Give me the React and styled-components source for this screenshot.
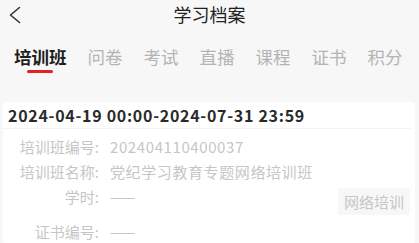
import React from 'react'
import styled, { createGlobalStyle } from 'styled-components'

const GlobalStyle = createGlobalStyle`
    body {
        margin: 0;
        background: #f7f7f7;
        font-family: "Noto Sans CJK SC", "Noto Sans", sans-serif;
    }
`

const Page = styled.div`
    width: 419px;
    height: 243px;
    overflow: hidden;
    background: #f7f7f7;
`

const Header = styled.div`
    display: grid;
    grid-template-columns: 40px 1fr 40px;
    align-items: center;
    height: 28px;
`

const Back = styled.div`
    display: flex;
    align-items: center;
    padding: 2px 0 0 8px;
    height: 28px;
    box-sizing: border-box;
`

const Title = styled.h1`
    margin: 0;
    text-align: center;
    font-size: 18px;
    font-weight: 400;
    color: #222;
    line-height: 28px;
`

const Tabs = styled.div`
    display: flex;
    gap: 21px;
    padding-left: 14px;
    margin-top: 17px;
`

const Tab = styled.div`
    display: flex;
    flex-direction: column;
    align-items: center;
    font-size: 17.5px;
    line-height: 24px;
    font-weight: ${p => (p.active ? 700 : 400)};
    color: ${p => (p.active ? '#1e1e1e' : '#b4b4b4')};
`

const Indicator = styled.div`
    width: 26px;
    height: 3px;
    margin-top: 1px;
    border-radius: 2px;
    background: ${p => (p.active ? '#e3211f' : 'transparent')};
`

const Card = styled.div`
    margin: 29px 4px 0 3px;
    background: #fff;
    border-radius: 3px;
`

const CardHead = styled.div`
    height: 26px;
    display: flex;
    align-items: center;
    padding-left: 5px;
    font-size: 16px;
    font-weight: 700;
    letter-spacing: 0.7px;
    color: #2a2a2a;
    border-bottom: 1px solid #f3f3f3;
    margin-right: 4px;
`

const CardBody = styled.div`
    padding-top: 5px;
`

const Row = styled.div`
    display: flex;
    align-items: flex-start;
    height: ${p => (p.tall ? 35 : 25)}px;
    font-size: 15px;
    line-height: 25px;
    color: #c6c6c6;
`

const Label = styled.div`
    width: 96px;
    text-align: right;
    margin-right: 11px;
    white-space: nowrap;
`

const Value = styled.div`
    flex: 1;
    white-space: nowrap;
    letter-spacing: 0.6px;
`

const Badge = styled.div`
    margin: 4px 5px 0 0;
    height: 27px;
    padding: 0 6px;
    display: flex;
    align-items: center;
    background: #f7f7f7;
    border-radius: 3px;
    font-size: 15px;
    color: #c6c6c6;
`

const tabs = ['培训班', '问卷', '考试', '直播', '课程', '证书', '积分']

const App = () => {
    return (
        <Page>
            <GlobalStyle />
            <Header>
                <Back>
                    <svg width="13" height="18" viewBox="0 0 13 18">
                        <path d="M11.5 1.5 L2.5 9 L11.5 16.5" fill="none" stroke="#333" strokeWidth="1.6" strokeLinecap="round" strokeLinejoin="round" />
                    </svg>
                </Back>
                <Title>学习档案</Title>
                <div />
            </Header>
            <Tabs>
                {tabs.map((t, i) => (
                    <Tab key={t} active={i === 0}>
                        {t}
                        <Indicator active={i === 0} />
                    </Tab>
                ))}
            </Tabs>
            <Card>
                <CardHead>2024-04-19 00:00-2024-07-31 23:59</CardHead>
                <CardBody>
                    <Row>
                        <Label>培训班编号:</Label>
                        <Value>202404110400037</Value>
                    </Row>
                    <Row>
                        <Label>培训班名称:</Label>
                        <Value>党纪学习教育专题网络培训班</Value>
                    </Row>
                    <Row tall>
                        <Label>学时:</Label>
                        <Value>——</Value>
                        <Badge>网络培训</Badge>
                    </Row>
                    <Row>
                        <Label>证书编号:</Label>
                        <Value>——</Value>
                    </Row>
                </CardBody>
            </Card>
        </Page>
    )
}

export default App
